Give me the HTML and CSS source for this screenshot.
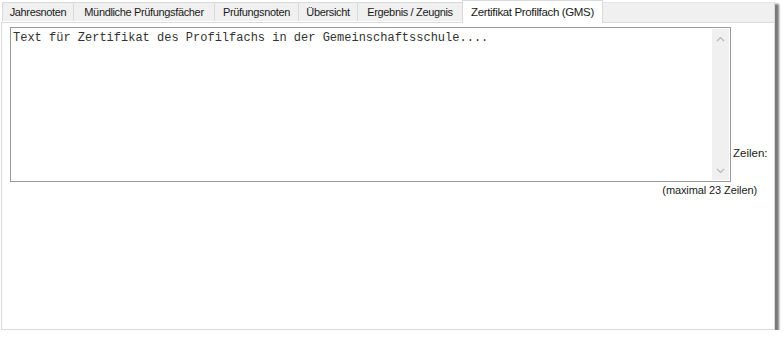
FILE: index.html
```html
<!DOCTYPE html>
<html lang="de">
  <head>
    <meta charset="UTF-8">
    <title>Zertifikat Profilfach</title>
    <link rel="stylesheet" href="styles.css">
  </head>
  <body>
    <div class="window">
      <div class="tabs">
        <div class="tab tab-1">Jahresnoten</div>
        <div class="tab tab-2">Mündliche Prüfungsfächer</div>
        <div class="tab tab-3">Prüfungsnoten</div>
        <div class="tab tab-4">Übersicht</div>
        <div class="tab tab-5">Ergebnis / Zeugnis</div>
        <div class="tab tab-6 active">Zertifikat Profilfach (GMS)</div>
        <div class="tab-fill"></div>
      </div>
      <div class="panel">
        <div class="textbox">
          <div class="text">Text für Zertifikat des Profilfachs in der Gemeinschaftsschule....</div>
          <div class="scroll">
            <svg width="17" height="12" viewBox="0 0 17 12"><path d="M5 8 L8.5 4.5 L12 8" fill="none" stroke="#b8b8b8" stroke-width="1.2"/></svg>
            <svg width="17" height="12" viewBox="0 0 17 12"><path d="M5 4 L8.5 7.5 L12 4" fill="none" stroke="#b8b8b8" stroke-width="1.2"/></svg>
          </div>
        </div>
        <div class="lines-label">Zeilen:</div>
        <div class="lines-note">(maximal 23 Zeilen)</div>
      </div>
    </div>
  </body>
</html>
```

FILE: styles.css
```css
body {
  margin: 0;
  background: #ffffff;
  font-family: "Liberation Sans", Arial, sans-serif;
  font-size: 11px;
  color: #1a1a1a;
}
.window {
  margin-left: 1px;
  width: 774px;
  height: 330px;
  display: flex;
  flex-direction: column;
  box-shadow: 4px 4px 2px #7a7a7a;
}
.tabs {
  display: flex;
  height: 22px;
  padding-left: 1px;
  background: #ffffff;
}
.tab {
  margin-top: 2px;
  height: 19px;
  box-sizing: border-box;
  border: 1px solid #d9d9d9;
  border-right: none;
  border-bottom: none;
  background: #f0f0f0;
  text-align: center;
  line-height: 18px;
  white-space: nowrap;
  letter-spacing: -0.35px;
}
.tab-1 { width: 71px; }
.tab-2 { width: 141px; }
.tab-3 { width: 84px; }
.tab-4 { width: 59px; }
.tab-5 { width: 105px; }
.tab-6 { width: 141px; }
.tab.active {
  margin-top: 0;
  height: 23px;
  background: #ffffff;
  border-right: 1px solid #d9d9d9;
  line-height: 22px;
  position: relative;
  z-index: 1;
  font-size: 11.5px;
}
.tab-fill {
  flex: 1;
  margin-top: 2px;
  background: #f0f0f0;
  border-top: 1px solid #e6e6e6;
  border-right: 1px solid #d9d9d9;
}
.panel {
  flex: 1;
  border: 1px solid #d9d9d9;
  background: #ffffff;
  padding: 4px 0 0 8px;
  display: grid;
  grid-template-columns: 721px auto;
  grid-template-rows: 155px auto;
  align-content: start;
}
.textbox {
  display: flex;
  border: 1px solid #9a9a9a;
  box-sizing: border-box;
}
.text {
  flex: 1;
  padding: 3px 0 0 2px;
  font-family: "Liberation Mono", "Courier New", monospace;
  font-size: 12px;
  color: #333333;
}
.scroll {
  width: 17px;
  margin: 1px 1px 1px 0;
  background: #f0f0f0;
  display: flex;
  flex-direction: column;
  justify-content: space-between;
  padding: 4px 0 3px;
}
.scroll svg {
  display: block;
}
.lines-label {
  align-self: end;
  margin: 0 0 23px 2px;
  font-size: 11.5px;
}
.lines-note {
  grid-column: 1 / 3;
  justify-self: end;
  margin: 2px 17px 0 0;
  font-size: 11px;
  letter-spacing: -0.1px;
}
```
